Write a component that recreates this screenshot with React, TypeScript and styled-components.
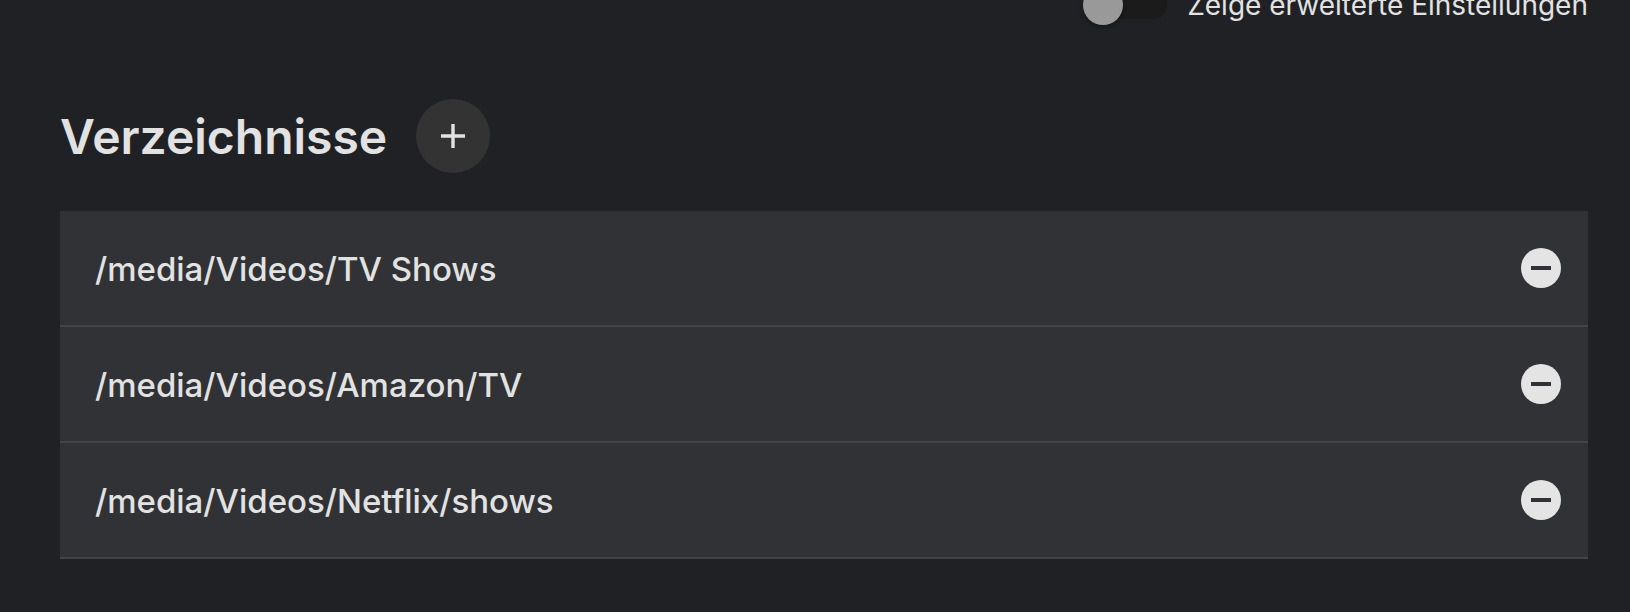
import React, { useState } from 'react';
import styled, { createGlobalStyle } from 'styled-components';

const GlobalStyle = createGlobalStyle`
  *, *::before { box-sizing: border-box; }
  html { background: #202125; }
  body {
    margin: 0;
    overflow: hidden;
    background: #202125;
    color: #e2e2e2;
    font-family: Inter, "Liberation Sans", sans-serif;
  }
`;

const Page = styled.main`
  padding: 0 42px 54px 60px;
`;

const AdvancedRow = styled.div`
  display: flex;
  justify-content: flex-end;
  align-items: center;
  gap: 20px;
  height: 42px;
  margin-top: -16px;
`;

const Toggle = styled.input`
  appearance: none;
  display: flex;
  align-items: center;
  width: 84px;
  height: 28px;
  margin: 0;
  border-radius: 14px;
  background: #1b1b1c;
  cursor: pointer;

  &::before {
    content: '';
    width: 40px;
    height: 40px;
    flex: none;
    border-radius: 50%;
    background: #999;
    box-shadow: 0 2px 4px rgba(0, 0, 0, 0.35);
  }

  &:checked {
    justify-content: flex-end;
  }
`;

const ToggleLabel = styled.label`
  font-size: 28px;
  line-height: 42px;
  white-space: nowrap;
`;

const SectionHeader = styled.header`
  display: flex;
  align-items: center;
  gap: 29px;
  margin-top: 73px;
`;

const Title = styled.h1`
  margin: 0;
  padding-top: 2px;
  font-size: 48px;
  font-weight: 600;
  line-height: 72px;
`;

const AddButton = styled.button`
  display: flex;
  align-items: center;
  justify-content: center;
  width: 74px;
  height: 74px;
  padding: 0;
  border: 0;
  border-radius: 50%;
  background: #333;
  color: #e2e2e2;
  cursor: pointer;
`;

const FolderList = styled.ul`
  margin: 38px 0 0;
  padding: 0;
  list-style: none;
`;

const FolderRow = styled.li`
  display: flex;
  align-items: center;
  justify-content: space-between;
  height: 116px;
  padding: 0 27px 0 35px;
  border-bottom: 2px solid #434447;
  background: #313235;
`;

const FolderPath = styled.span`
  padding-top: 2px;
  font-size: 33px;
  font-weight: 500;
  line-height: 40px;
`;

const RemoveButton = styled.button`
  display: flex;
  width: 40px;
  height: 40px;
  padding: 0;
  border: 0;
  background: none;
  color: #e4e4e4;
  cursor: pointer;
`;

const initialFolders = [
  '/media/Videos/TV Shows',
  '/media/Videos/Amazon/TV',
  '/media/Videos/Netflix/shows',
];

export default function App() {
  const [advanced, setAdvanced] = useState(false);
  const [folders, setFolders] = useState(initialFolders);

  return (
    <>
      <GlobalStyle />
      <Page>
        <AdvancedRow>
          <Toggle
            id="advanced"
            type="checkbox"
            checked={advanced}
            onChange={(e) => setAdvanced(e.target.checked)}
          />
          <ToggleLabel htmlFor="advanced">Zeige erweiterte Einstellungen</ToggleLabel>
        </AdvancedRow>
        <SectionHeader>
          <Title>Verzeichnisse</Title>
          <AddButton type="button" aria-label="Hinzufügen">
            <svg width="24" height="24" viewBox="0 0 24 24" fill="currentColor" aria-hidden="true">
              <path d="M10.3 0h3.4v10.3H24v3.4H13.7V24h-3.4V13.7H0v-3.4h10.3z" />
            </svg>
          </AddButton>
        </SectionHeader>
        <FolderList>
          {folders.map((path) => (
            <FolderRow key={path}>
              <FolderPath>{path}</FolderPath>
              <RemoveButton
                type="button"
                aria-label={`${path} entfernen`}
                onClick={() => setFolders(folders.filter((f) => f !== path))}
              >
                <svg width="40" height="40" viewBox="0 0 40 40" aria-hidden="true">
                  <circle cx="20" cy="20" r="20" fill="currentColor" />
                  <path d="M10 18h20v4H10z" fill="#313235" />
                </svg>
              </RemoveButton>
            </FolderRow>
          ))}
        </FolderList>
      </Page>
    </>
  );
}
